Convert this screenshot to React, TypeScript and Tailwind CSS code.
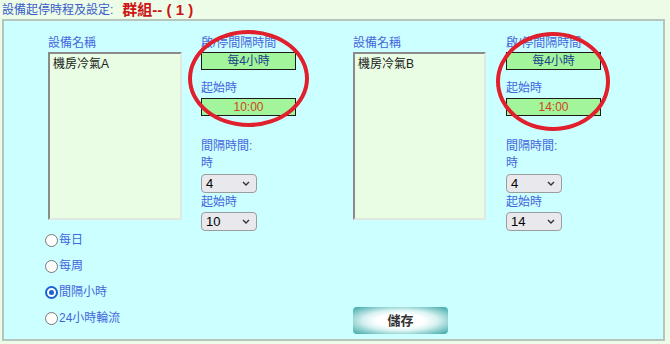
import React from "react";

const font = "font-['Liberation_Sans','Noto_Sans_CJK_TC',sans-serif]";

function Chevron() {
  return (
    <svg width="8" height="5" viewBox="0 0 8 5" className="shrink-0">
      <path d="M1 1 L4 4 L7 1" fill="none" stroke="#333" strokeWidth="1.4" />
    </svg>
  );
}

function Select({ value }: { value: string }) {
  return (
    <div className="flex h-[19px] w-[56px] items-center justify-between rounded-[4px] border border-[#9c9c9c] bg-[#e9e9ed] pl-[4px] pr-[6px] text-[13px] leading-[17px] text-black">
      <span>{value}</span>
      <Chevron />
    </div>
  );
}

function Group({
  name,
  start,
  hour,
  listW,
  gap,
}: {
  name: string;
  start: string;
  hour: string;
  listW: string;
  gap: string;
}) {
  return (
    <div className={`flex w-[305px] ${gap}`}>
      <div className="flex flex-col">
        <div className="h-[16px] text-[12px] leading-[16px] text-[#4466dd]">設備名稱</div>
        <div
          className={`mt-[1px] h-[168px] ${listW} border-2 border-t-[#8a8a8a] border-l-[#8a8a8a] border-r-[#e0e8e0] border-b-[#e0e8e0] bg-[#e8fde3] px-[3px] pt-[2px] text-[12px] leading-[16px] text-[#222]`}
        >
          {name}
        </div>
      </div>
      <div className="flex w-[95px] flex-col text-[12px] leading-[16px] text-[#4466dd]">
        <div className="h-[16px]">啟/停間隔時間</div>
        <div className="mt-[1px] flex h-[18px] items-center justify-center border-[1.5px] border-[#1a1a1a] bg-[#a2f59a] text-[#1c3f8c]">
          每4小時
        </div>
        <div className="mt-[10px] h-[16px]">起始時</div>
        <div className="mt-[2px] flex h-[18px] items-center justify-center border-[1.5px] border-[#1a1a1a] bg-[#a2f59a] text-[#d0451b]">
          {start}
        </div>
        <div className="mt-[22px] h-[16px]">間隔時間:</div>
        <div className="mt-[1px] h-[16px]">時</div>
        <div className="mt-[3px]">
          <Select value="4" />
        </div>
        <div className="mt-[1px] h-[16px]">起始時</div>
        <div className="mt-[2px]">
          <Select value={hour} />
        </div>
      </div>
    </div>
  );
}

function Radio({ label, checked }: { label: string; checked?: boolean }) {
  return (
    <div className="flex h-[16px] items-center text-[12px] leading-[16px] text-[#4466dd]">
      {checked ? (
        <span className="flex h-[13px] w-[13px] items-center justify-center rounded-full border-2 border-[#1a62d6] bg-white">
          <span className="h-[5px] w-[5px] rounded-full bg-[#1a62d6]" />
        </span>
      ) : (
        <span className="h-[13px] w-[13px] rounded-full border border-[#777] bg-white" />
      )}
      <span className="ml-[1px]">{label}</span>
    </div>
  );
}

export default function App() {
  return (
    <div className={`h-[344px] w-[670px] overflow-hidden bg-[#edfce6] ${font}`}>
      <div className="flex h-[19px] items-center pl-[2px]">
        <span className="text-[12px] leading-[16px] text-[#3a5ccc]">設備起停時程及設定:</span>
        <span className="ml-[9px] text-[15px] font-bold leading-[17px] text-[#cc1414]">群組-- ( 1 )</span>
      </div>
      <div className="relative ml-[2px] h-[322px] w-[663px] border-2 border-[#b6c5bc] bg-[#ccffff] pl-[44px] pt-[14px]">
        <div className="flex">
          <Group name="機房冷氣A" start="10:00" hour="10" listW="w-[134px]" gap="gap-[19px]" />
          <Group name="機房冷氣B" start="14:00" hour="14" listW="w-[133px]" gap="gap-[20px]" />
        </div>
        <div className="ml-[-3px] mt-[1px] flex">
          <div className="flex w-[308px] flex-col gap-[10px]">
            <Radio label="每日" />
            <Radio label="每周" />
            <Radio label="間隔小時" checked />
            <Radio label="24小時輪流" />
          </div>
          <button className="mt-[75px] flex h-[27px] w-[95px] items-center justify-center rounded-[4px] bg-[radial-gradient(ellipse_at_center,#ffffff_35%,#d8f2f2_55%,#35a5a3_100%)] text-[13px] font-bold leading-[16px] text-[#333]">
            儲存
          </button>
        </div>
        <div className="pointer-events-none absolute left-[184px] top-[9px] h-[97px] w-[121px] rounded-[50%] border-[4px] border-[#e0202c]" />
        <div className="pointer-events-none absolute left-[492px] top-[11px] h-[99px] w-[114px] rounded-[50%] border-[4px] border-[#e0202c]" />
      </div>
    </div>
  );
}
